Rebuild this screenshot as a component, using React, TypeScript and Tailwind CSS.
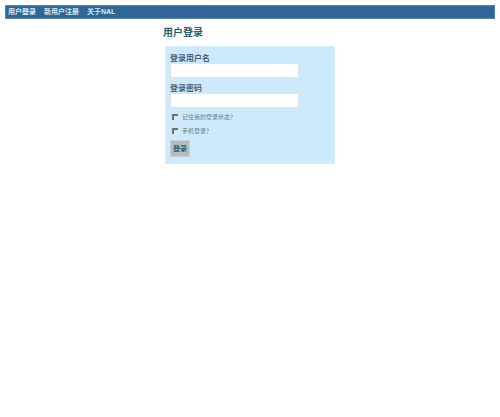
import { useState } from "react";

const links = ["用户登录", "新用户注册", "关于NAL"];

function TextField({ id, label, type }: { id: string; label: string; type: string }) {
  return (
    <div className="flex flex-col">
      <label htmlFor={id} className="h-2.5 text-[8px] leading-3 font-bold text-[#4a6270]">
        {label}
      </label>
      <input
        id={id}
        type={type}
        className="h-[15px] w-[129px] border border-[#dce3e8] bg-white px-1 text-[8px] outline-none"
      />
    </div>
  );
}

function CheckField({ id, label }: { id: string; label: string }) {
  const [checked, setChecked] = useState(false);
  return (
    <div className="flex h-3.5 items-center gap-1">
      <input
        id={id}
        type="checkbox"
        checked={checked}
        onChange={(e) => setChecked(e.target.checked)}
        className="size-1.5 appearance-none border-t-2 border-l-2 border-[#66737b] bg-[#e6e6dc] checked:bg-[#66737b]"
      />
      <label htmlFor={id} className="text-[6px] leading-3 text-[#657f8e]">
        {label}
      </label>
    </div>
  );
}

export default function App() {
  return (
    <div className="bg-white px-[5px] pt-[5px] font-['Liberation_Sans','Noto_Sans_CJK_SC',sans-serif]">
      <nav className="flex h-3.5 items-end gap-2 border border-[#5686b0] bg-[#2d6697] px-0.5">
        {links.map((text) => (
          <a key={text} href="#" className="text-[7px] leading-3 font-bold text-[#dbe8f2]">
            {text}
          </a>
        ))}
      </nav>
      <main className="mx-auto w-[174px] pt-2">
        <h1 className="h-3 text-[10px] leading-3 font-bold text-[#2b5d6e]">用户登录</h1>
        <form
          onSubmit={(e) => e.preventDefault()}
          className="mt-[7px] ml-0.5 flex w-[170px] flex-col border border-[#d9eefb] bg-[#cceafc] px-1 py-1.5"
        >
          <div className="flex flex-col gap-[5px]">
            <TextField id="username" label="登录用户名" type="text" />
            <TextField id="password" label="登录密码" type="password" />
          </div>
          <div className="flex flex-col pt-0.5 pl-0.5">
            <CheckField id="remember" label="记住我的登录状态？" />
            <CheckField id="mobile" label="手机登录？" />
          </div>
          <button
            type="submit"
            className="mt-0.5 h-[17px] w-5 border border-[#c9d0d3] bg-[#b6bdc1] text-[7px] leading-3 font-bold text-[#2b6577]"
          >
            登录
          </button>
        </form>
      </main>
    </div>
  );
}
